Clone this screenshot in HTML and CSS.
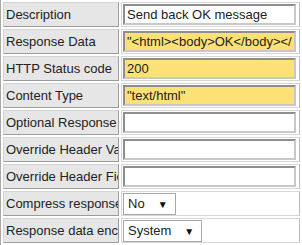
FILE: index.html
```html
<!DOCTYPE html>
<html lang="en">
<head>
  <meta charset="UTF-8" />
  <title>Response settings</title>
  <link rel="stylesheet" href="styles.css">
</head>
<body>
  <table class="cfg">
    <tr>
      <td class="lbl"><div>Description</div></td>
      <td class="val"><input type="text" value="Send back OK message"></td>
    </tr>
    <tr>
      <td class="lbl"><div>Response Data</div></td>
      <td class="val"><input type="text" class="hl" value="&quot;&lt;html&gt;&lt;body&gt;OK&lt;/body&gt;&lt;/html&gt;&quot;"></td>
    </tr>
    <tr>
      <td class="lbl"><div>HTTP Status code</div></td>
      <td class="val"><input type="text" class="hl" value="200"></td>
    </tr>
    <tr>
      <td class="lbl"><div>Content Type</div></td>
      <td class="val"><input type="text" class="hl" value="&quot;text/html&quot;"></td>
    </tr>
    <tr>
      <td class="lbl"><div>Optional Response Headers</div></td>
      <td class="val"><input type="text" value=""></td>
    </tr>
    <tr>
      <td class="lbl"><div>Override Header Values</div></td>
      <td class="val"><input type="text" value=""></td>
    </tr>
    <tr>
      <td class="lbl"><div>Override Header Fields</div></td>
      <td class="val"><input type="text" value=""></td>
    </tr>
    <tr>
      <td class="lbl"><div>Compress response</div></td>
      <td class="val"><span class="sel">No<b>&#9660;</b></span></td>
    </tr>
    <tr>
      <td class="lbl"><div>Response data encoding</div></td>
      <td class="val"><span class="sel">System<b>&#9660;</b></span></td>
    </tr>
  </table>
</body>
</html>
```

FILE: styles.css
```css
body {
  margin: 0;
  background: #ffffff;
  font-family: 'Liberation Sans', Arial, sans-serif;
  font-size: 13px;
  color: #222;
}

.cfg {
  border-left: 1px solid #a8a8a8;
  border-spacing: 2px;
}

.cfg td {
  padding: 0;
  height: 23px;
}

.lbl {
  width: 114px;
  background: #e6e6e6;
  border: 1px solid;
  border-color: #d4d4d4 #9c9c9c #9c9c9c #d4d4d4;
}

.lbl div {
  width: 112px;
  overflow: hidden;
  white-space: nowrap;
  padding-left: 2px;
  line-height: 23px;
}

.val {
  width: 176px;
  border: 1px solid #d6d6d6;
  border-right-color: #bdbdbd;
  padding-left: 1px !important;
}

.val input {
  box-sizing: border-box;
  width: 173px;
  height: 21px;
  margin: 0;
  padding: 0 2px;
  font: 13px 'Liberation Sans', Arial, sans-serif;
  color: #222;
  background: #fff;
  border: 2px solid;
  border-color: #8e8e8e #c8c8c8 #c8c8c8 #8e8e8e;
  display: block;
}

.val input.hl {
  background: #fde176;
}

.sel {
  display: inline-block;
  height: 20px;
  line-height: 20px;
  padding: 0 7px 0 4px;
  border: 1px solid #a8a8a8;
  background: #fff;
  vertical-align: top;
}

.sel b {
  font-size: 10px;
  margin-left: 13px;
  font-weight: normal;
  color: #111;
}
```
